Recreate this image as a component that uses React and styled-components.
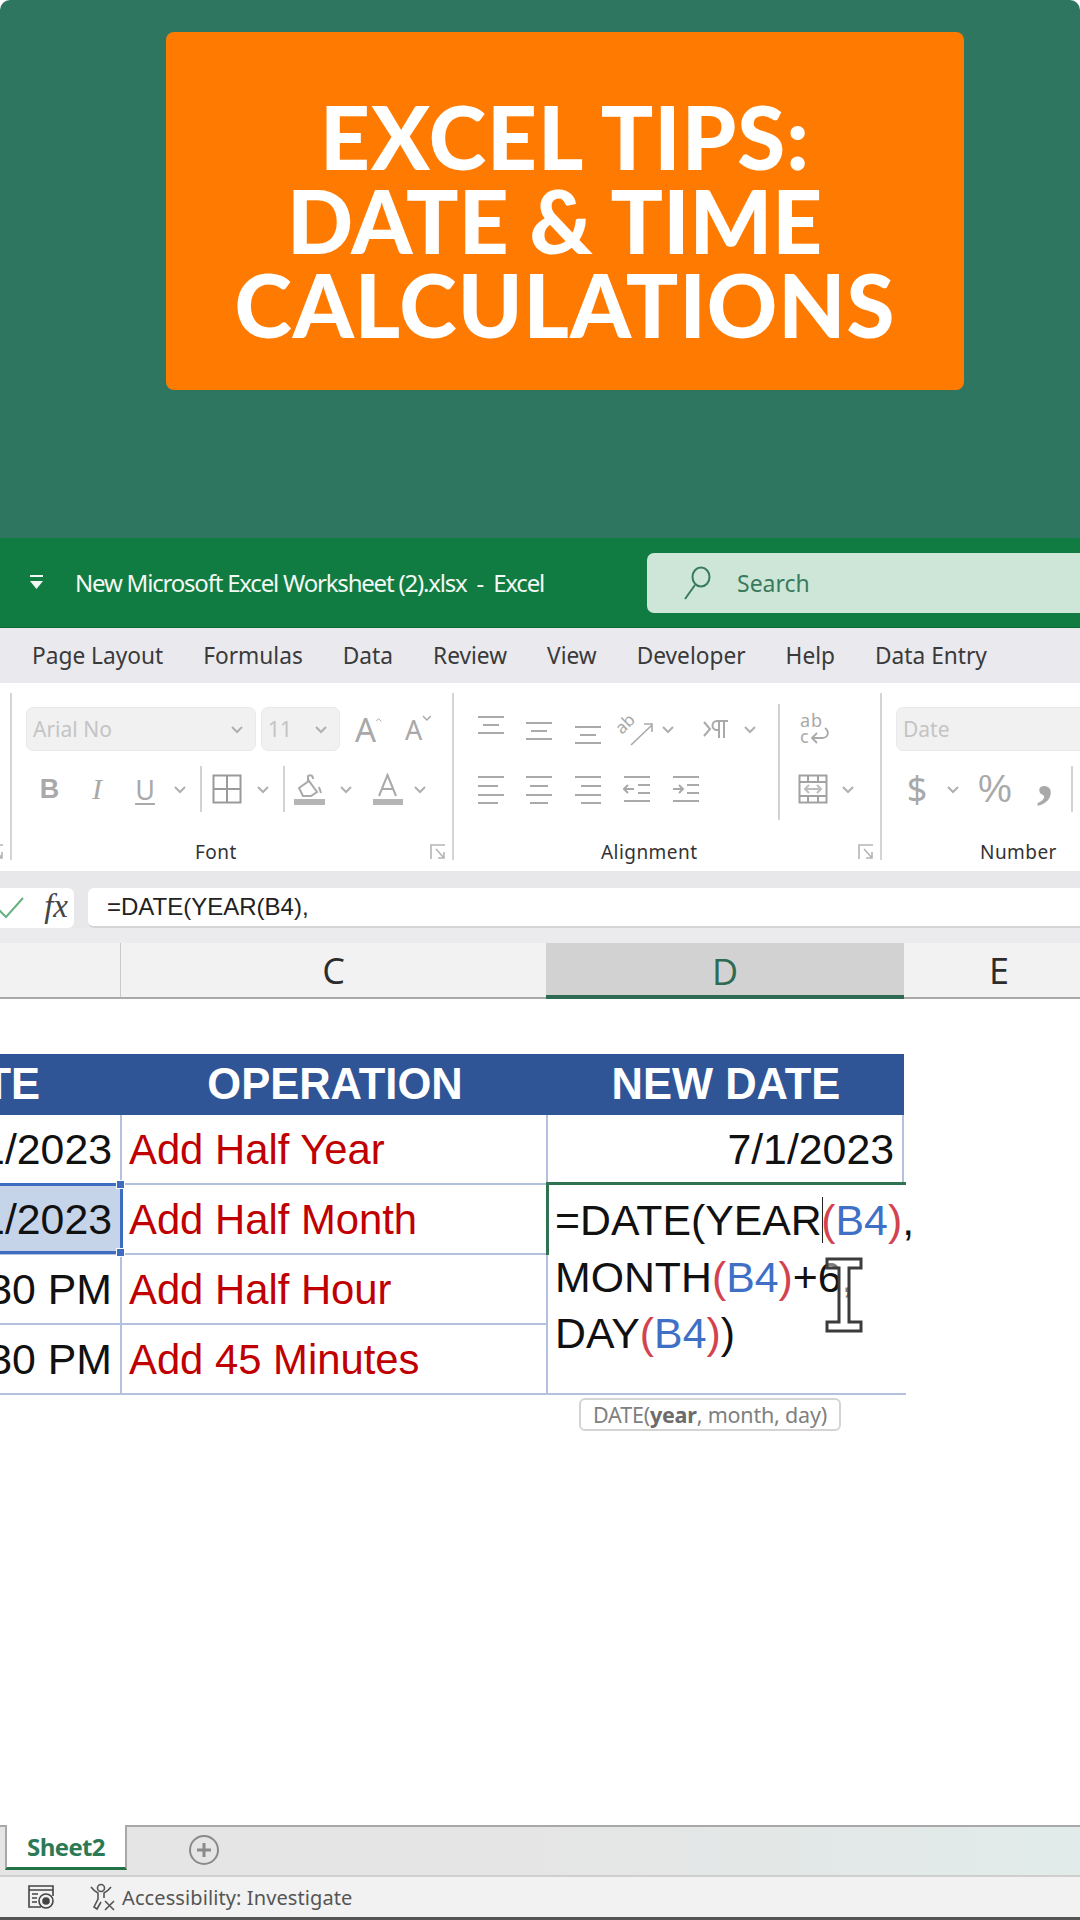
import React from "react";
import styled, { createGlobalStyle } from "styled-components";

const Global = createGlobalStyle`
  html, body { margin: 0; padding: 0; background: #000; }
  #root { width: 1080px; height: 1920px; overflow: hidden; }
  * { box-sizing: border-box; }
`;

const ICON = "#a9a9a9";
const UI = `"Noto Sans", "Open Sans", sans-serif`;
const CELL = `"Liberation Sans", Arial, sans-serif`;

const Page = styled.div`
  width: 1080px; height: 1920px; display: flex; flex-direction: column; overflow: hidden; background: #fff;
  font-family: ${UI};
`;
const Hero = styled.header`
  height: 538px; flex: none; background: #2e7660; padding: 32px 116px 148px 166px; border-radius: 10px 10px 0 0;
`;
const Card = styled.div`
  height: 358px; background: #ff7a00; border-radius: 8px; display: flex; align-items: center; justify-content: center;
`;
const Headline = styled.h1`
  margin: 0; padding-top: 20px; color: #fff; font: 900 87px/84px Lato, sans-serif; text-align: center; white-space: pre;
`;
const HeadLine = styled.span`
  display: block; letter-spacing: ${p => p.$ls}px;
`;

const TitleBar = styled.div`
  height: 90px; flex: none; background: #107c41; display: flex; align-items: center; padding-left: 30px;
  border-bottom: 1px solid #0d6b38;
`;
const TitleText = styled.div`
  margin-left: 32px; width: 572px; color: #f2f8f4; font: 400 24px ${UI}; letter-spacing: -1.2px; white-space: pre;
`;
const SearchBox = styled.div`
  flex: 1; height: 60px; margin-right: -8px; background: #cde6d8; border-radius: 7px; display: flex; align-items: center; padding-left: 36px; gap: 26px;
  color: #3a7a5c; font: 400 23px ${UI};
`;

const Tabs = styled.nav`
  height: 55px; flex: none; background: #e9e9ee; display: flex; align-items: center; padding-left: 32px; gap: 40px;
  color: #3a3a3a; font: 400 22.7px ${UI}; white-space: nowrap;
`;
const Tab = styled.span``;

const Ribbon = styled.section`
  height: 188px; flex: none; background: #fff; display: flex;
`;
const Group = styled.div`
  width: ${p => p.$w}px; flex: none; height: 100%; padding: 24px 0 0 ${p => p.$pl}px; display: flex; flex-direction: column; overflow: hidden;
`;
const Rule = styled.i`
  width: 2px; flex: none; height: 167px; margin-top: 10px; background: #d4d4d4;
`;
const Tools = styled.div`
  display: flex; flex-direction: column; gap: 15px;
`;
const ToolColumns = styled.div`
  display: flex; align-items: flex-start; height: 105px;
`;
const ToolRow = styled.div`
  display: flex; align-items: center; height: ${p => p.$h || 46}px;
`;
const Slot = styled.span`
  width: ${p => p.$w}px; flex: none; height: 100%; display: flex; align-items: center; justify-content: center; color: ${ICON};
`;
const Combo = styled.div`
  width: ${p => p.$w}px; flex: none; height: 44px; margin-right: ${p => p.$mr || 0}px; background: #f1f1f1; border: 1px solid #e9e9e9; border-radius: 7px;
  display: flex; align-items: center; justify-content: space-between; padding: 0 11px 0 6px; color: #c4c4c4; font: 400 21px ${UI};
`;
const SmallSep = styled.i`
  width: 2px; height: 46px; background: #d2d2d2; display: block;
`;
const TallSepSlot = styled.div`
  width: 32px; flex: none; height: 116px; margin-top: -3px; display: flex; justify-content: center;
`;
const TallSep = styled.i`
  width: 2px; height: 100%; background: #d2d2d2; display: block;
`;
const Bold = styled.span`font: 700 27px ${CELL}; color: ${ICON};`;
const Italic = styled.span`font: italic 400 30px "Liberation Serif", serif; color: ${ICON};`;
const Under = styled.span`font: 400 27px ${UI}; color: ${ICON}; text-decoration: underline; text-decoration-thickness: 1.5px; text-underline-offset: 3px;`;
const BigA = styled.span`font: 400 ${p => p.$s}px ${UI}; color: ${ICON}; line-height: 1;`;
const Sym = styled.span`font: 400 ${p => p.$s}px ${p => p.$f || UI}; color: ${ICON}; line-height: 1;`;
const CommaMark = styled.span`
  display: block; font-weight: 700; margin-top: -30px;
`;
const Caps = styled.svg`
  margin-top: ${p => p.$mt}px;
`;
const LabelRow = styled.div`
  margin-top: auto; height: 38px; display: flex; align-items: center; justify-content: space-between; padding-right: 6px; padding-left: ${p => p.$l}px; margin-left: -${p => p.$pl}px;
`;
const GroupLabel = styled.span`
  font: 400 19px ${UI}; color: #333; letter-spacing: .45px;
`;
const Stub = styled(Group)`
  padding: 0;
`;

const FormulaBar = styled.div`
  height: 57px; flex: none; background: #e8e8ea; padding-top: 17px; display: flex; gap: 14px;
`;
const FxBox = styled.div`
  width: 74px; background: #fff; border-radius: 0 6px 6px 0; display: flex; align-items: center; justify-content: space-between; padding-right: 6px;
`;
const Fx = styled.span`
  font: italic 400 33px "Liberation Serif", serif; color: #444; margin-top: -3px;
`;
const FormulaInput = styled.div`
  flex: 1; background: #fff; border-radius: 6px 0 0 6px; border-bottom: 2px solid #d5d5d5; padding-left: 19px; display: flex; align-items: center;
  font: 400 24px ${CELL}; color: #222;
`;

const HeadStrip = styled.div`
  height: 15px; flex: none; background: #ebebed;
`;
const ColumnHeads = styled.div`
  height: 56px; flex: none; display: grid; grid-template-columns: 120px 426px 358px 190px; background: #f2f2f2; border-bottom: 2px solid #a9a9a9;
`;
const ColHead = styled.div`
  display: flex; align-items: center; justify-content: center; font: 400 36px "Open Sans", sans-serif;
  color: ${p => p.$on ? "#2f6b52" : "#2c2c2c"};
  background: ${p => p.$on ? "#d2d2d2" : "transparent"};
  border-left: ${p => p.$edge ? "1px solid #c9c9c9" : "none"};
  box-shadow: ${p => p.$on ? "inset 0 -4px 0 #2f6b52" : "none"};
  margin-bottom: ${p => p.$on ? "-2px" : "0"};
`;

const Sheet = styled.main`
  flex: 1; background: #fff; padding-top: 55px;
`;
const Table = styled.div`
  width: 904px; display: grid; grid-template-columns: 122px 426px 356px; grid-template-rows: 61px 70px 70px 70px 70px;
  position: relative;
`;
const Head = styled.div`
  background: #2f5597; color: #fff; font: 700 43.5px ${CELL}; display: flex; align-items: center; overflow: hidden; white-space: nowrap;
  justify-content: ${p => p.$end ? "flex-end" : "center"};
  padding-right: ${p => p.$end ? "82px" : "0"};
`;
const Cell = styled.div`
  border-bottom: 2px solid #b3c1de; border-right: 2px solid #b3c1de; display: flex; align-items: center; overflow: hidden; white-space: nowrap;
  font: 400 ${p => p.$red ? "41.8px" : "42.8px"} ${CELL}; color: ${p => p.$red ? "#c00000" : "#111"};
  justify-content: ${p => p.$right ? "flex-end" : "flex-start"};
  padding: 1px ${p => p.$right ? "8px" : "0"} 0 ${p => p.$right ? "0" : "7px"};
  background: ${p => p.$sel ? "#c6d4ea" : "#fff"};
`;
const Selection = styled.div`
  position: absolute; left: -4px; width: 127px; top: 129px; height: 71px; border: 3px solid #3d6cc0; pointer-events: none;
`;
const Handle = styled.i`
  position: absolute; right: -5px; width: 9px; height: 9px; background: #3d6cc0; border: 1px solid #fff;
  ${p => p.$top ? "top: -6px;" : "bottom: -6px;"}
`;
const EditCell = styled.div`
  grid-column: 3; grid-row: 3 / span 3; position: relative; border-bottom: 2px solid #b3c1de; border-top: 3px solid #2f7352;
  margin-top: -3px; margin-right: -2px; padding: 7px 0 0 7px; font: 400 42.8px/56.5px ${CELL}; color: #111; white-space: nowrap;
`;
const EditEdge = styled.i`
  position: absolute; left: -2px; top: -3px; width: 3px; height: 73px; background: #2f7352;
`;
const Paren = styled.span`color: #d2434f;`;
const Ref = styled.span`color: #3f70c6;`;
const Caret = styled.span`
  display: inline-block; width: 0; height: 46px; border-left: 1.5px solid #222; vertical-align: -8px; margin-right: -1.5px;
`;
const Beam = styled.svg`
  position: absolute; left: 277px; top: 72px;
`;
const Hint = styled.div`
  position: absolute; left: 31px; top: 213px; width: 262px; height: 33px; background: #fff; border: 2px solid #d4d4d4; border-radius: 6px;
  display: flex; align-items: center; justify-content: center; font: 400 21.5px ${UI}; color: #808080; letter-spacing: -.2px;
  b { color: #6c6c6c; font-weight: 700; }
`;

const SheetTabs = styled.div`
  height: 52px; flex: none; background: linear-gradient(90deg, #e5e5e5 0%, #e5e5e5 50%, #e1ecea 100%); border-top: 2px solid #a8a8a8; border-bottom: 2px solid #cfcfcf;
  display: flex; padding-left: 5px;
`;
const SheetTab = styled.div`
  width: 122px; height: 45px; margin-top: -2px; background: #fff; border-left: 2px solid #a8a8a8; border-right: 2px solid #a8a8a8; border-bottom: 3px solid #217346;
  display: flex; align-items: center; justify-content: center; font: 700 24px "Open Sans", sans-serif; color: #2b7a55; letter-spacing: -.6px;
`;
const AddSheet = styled.div`
  margin-left: 62px; margin-top: 8px; width: 30px; height: 30px;
`;
const StatusBar = styled.footer`
  height: 43px; flex: none; background: #f2f2f2; border-bottom: 3px solid #555; display: flex; align-items: center; padding-left: 27px; color: #555; font: 400 20px ${UI};
`;
const StatusText = styled.span`margin-left: 6px; letter-spacing: .1px;`;

const Chev = () => (
  <svg width="14" height="9" viewBox="0 0 14 9" fill="none" stroke="#b0b0b0" strokeWidth="2"><path d="M2 2l5 5 5-5" /></svg>
);
const Lines = ({ rows }) => (
  <svg width="28" height="32" viewBox="0 0 28 32" fill="none" stroke={ICON} strokeWidth="2">
    {rows.map(([a, b, y]) => <path key={y} d={`M${a} ${y}H${b}`} />)}
  </svg>
);
const Launcher = () => (
  <svg width="16" height="16" viewBox="0 0 16 16" fill="none" stroke="#b5b5b5" strokeWidth="1.6">
    <path d="M15 1H1v14M6 5l8 9M14 8v6H8" />
  </svg>
);
const Borders = () => (
  <svg width="30" height="30" viewBox="0 0 30 30" fill="none" stroke="#9a9a9a" strokeWidth="2"><rect x="1.5" y="1.5" width="27" height="27" /><path d="M15 1.500v27M1.500 15h27" /></svg>
);
const Bucket = () => (
  <svg width="32" height="32" viewBox="0 0 32 32" fill="none" stroke={ICON} strokeWidth="2">
    <path d="M5 15L15 8l8 11-6 4H9zM14 9V3c3-2 5 0 5 3M25 14l2 6" />
    <path d="M0 26h31v6H0z" fill="#b5b5b5" stroke="none" />
  </svg>
);
const ColorA = () => (
  <svg width="32" height="32" viewBox="0 0 32 32" fill="none" stroke={ICON} strokeWidth="2">
    <path d="M7 23L15.5 2 24 23M10 16h11" />
    <path d="M1 26h30v6H1z" fill="#b5b5b5" stroke="none" />
  </svg>
);
const Orient = () => (
  <svg width="34" height="32" viewBox="0 0 34 32" fill="none" stroke={ICON} strokeWidth="1.6" overflow="visible">
    <text x="2" y="22" fontFamily="Noto Sans" fontSize="17" fill={ICON} stroke="none" transform="rotate(-45 2 22)">ab</text>
    <path d="M11 32L32 12M24 11h8v8" />
  </svg>
);
const Para = () => (
  <svg width="26" height="22" viewBox="0 0 26 22" fill="none" stroke={ICON} strokeWidth="2">
    <path d="M1 4l6 7-6 7" />
    <path d="M19 3h-5a4 4 0 000 9h2V3M16 12v8M19 3h6M21 3v17" />
  </svg>
);
const Wrap = () => (
  <svg width="30" height="32" viewBox="0 0 30 32" fill="none" stroke={ICON} strokeWidth="1.8">
    <text x="0" y="14" fontFamily="Noto Sans" fontSize="18" letterSpacing="1" fill={ICON} stroke="none">ab</text>
    <text x="0" y="30" fontFamily="Noto Sans" fontSize="18" fill={ICON} stroke="none">c</text>
    <path d="M25 15c5 4 3 10-3 10H12M17 20l-5 5 5 5" />
  </svg>
);
const Merge = () => (
  <svg width="30" height="30" viewBox="0 0 30 30" fill="none" stroke="#a2a2a2" strokeWidth="2">
    <rect x="1.5" y="1.5" width="27" height="27" />
    <path d="M1.500 8h27M1.500 22h27M10 1.500V8M20 1.500V8M10 22v7M20 22v7" />
    <path d="M7 15h16M11 11l-4 4 4 4M19 11l4 4-4 4" stroke="#bdbdbd" />
  </svg>
);
const Indent = ({ dir }) => (
  <svg width="28" height="28" viewBox="0 0 28 28" fill="none" stroke={ICON} strokeWidth="2">
    <path d="M1 2h26M1 26h26M15 10h12M15 18h12" />
    {dir === "in" ? <path d="M1 14h9M7 10l4 4-4 4" /> : <path d="M11 14H2M5 10l-4 4 4 4" />}
  </svg>
);
const SearchGlyph = () => (
  <svg width="28" height="34" viewBox="0 0 28 34" fill="none" stroke="#3a7a5c" strokeWidth="2"><ellipse cx="18" cy="11" rx="8.500" ry="9.500" /><path d="M12 19L2 33" /></svg>
);
const Quick = () => (
  <svg width="13" height="15" viewBox="0 0 13 15" fill="#f2f8f4"><path d="M0 0h13v2H0zM0 6h13l-6.500 8z" /></svg>
);
const Check = () => (
  <svg width="24" height="24" viewBox="0 0 24 24" fill="none" stroke="#66b27f" strokeWidth="2"><path d="M-2 13l8 8L23 2" /></svg>
);
const IBeam = () => (
  <Beam width="38" height="76" viewBox="0 0 38 76" fill="none">
    <path d="M2 2h34v9H24v54h12v9H2v-9h12V11H2z" fill="#fff" fillOpacity=".45" stroke="#3c3c3c" strokeWidth="3" />
  </Beam>
);
const Plus = () => (
  <svg width="30" height="30" viewBox="0 0 30 30" fill="none" stroke="#8a8a8a"><circle cx="15" cy="15" r="14" strokeWidth="2" /><path d="M8 15h14M15 8v14" strokeWidth="3" /></svg>
);
const Macro = () => (
  <svg width="28" height="24" viewBox="0 0 28 24" fill="none" stroke="#444" strokeWidth="1.600">
    <path d="M14 22H2V1h24v10M2 5h24M5 9h6M5 13h5M5 17h5" />
    <circle cx="19" cy="16" r="7" fill="#f2f2f2" /><circle cx="19" cy="16" r="3" fill="#444" />
  </svg>
);
const Access = () => (
  <svg width="28" height="28" viewBox="0 0 28 28" fill="none" stroke="#555" strokeWidth="1.600">
    <circle cx="13" cy="5" r="3.500" />
    <path d="M3 4c3 4 5 5 7 6v6l-4 8 3 2 4-7M23 4c-3 4-5 5-7 6v5" />
    <path d="M17 18l9 9M26 18l-9 9" />
  </svg>
);

export default function App() {
  return (
    <>
      <Global />
      <Page>
        <Hero>
          <Card>
            <Headline>
              <HeadLine $ls={1}>EXCEL TIPS:</HeadLine>
              <HeadLine $ls={0}>{"DATE & TIME\u00a0"}</HeadLine>
              <HeadLine $ls={1}>CALCULATIONS</HeadLine>
            </Headline>
          </Card>
        </Hero>
        <TitleBar>
          <Quick />
          <TitleText>{"New Microsoft Excel Worksheet (2).xlsx  -  Excel"}</TitleText>
          <SearchBox><SearchGlyph /><span>Search</span></SearchBox>
        </TitleBar>
        <Tabs>
          {["Page Layout", "Formulas", "Data", "Review", "View", "Developer", "Help", "Data Entry"].map(t => <Tab key={t}>{t}</Tab>)}
        </Tabs>
        <Ribbon>
          <Stub $w={10} $pl={0}><LabelRow $l={0} $pl={12}><Launcher /></LabelRow></Stub>
          <Rule />
          <Group $w={440} $pl={14}>
            <Tools>
              <ToolRow $h={44}>
                <Combo $w={230} $mr={5}>Arial No<Chev /></Combo>
                <Combo $w={79}>11<Chev /></Combo>
                <Slot $w={15} />
                <Slot $w={27}><BigA $s={33}>A</BigA><Caps $mt={-14} width="9" height="14" viewBox="0 0 9 14" fill="none" stroke={ICON} strokeWidth="1.500"><path d="M0 6l4-4 4 4" /></Caps></Slot>
                <Slot $w={23} />
                <Slot $w={27}><BigA $s={27}>A</BigA><Caps $mt={-18} width="10" height="14" viewBox="0 0 10 14" fill="none" stroke={ICON} strokeWidth="1.500"><path d="M1 3l4 4 4-4" /></Caps></Slot>
              </ToolRow>
              <ToolRow>
                <Slot $w={47}><Bold>B</Bold></Slot>
                <Slot $w={48}><Italic>I</Italic></Slot>
                <Slot $w={48}><Under>U</Under></Slot>
                <Slot $w={22}><Chev /></Slot>
                <Slot $w={20}><SmallSep /></Slot>
                <Slot $w={32}><Borders /></Slot>
                <Slot $w={40}><Chev /></Slot>
                <Slot $w={2}><SmallSep /></Slot>
                <Slot $w={50}><Bucket /></Slot>
                <Slot $w={22}><Chev /></Slot>
                <Slot $w={10} />
                <Slot $w={42}><ColorA /></Slot>
                <Slot $w={22}><Chev /></Slot>
              </ToolRow>
            </Tools>
            <LabelRow $l={183} $pl={14}><GroupLabel>Font</GroupLabel><Launcher /></LabelRow>
          </Group>
          <Rule />
          <Group $w={426} $pl={13}>
            <ToolColumns>
              <Tools>
                <ToolRow $h={44}>
                  <Slot $w={48}><Lines rows={[[1, 27, 4], [6, 22, 12], [1, 27, 20]]} /></Slot>
                  <Slot $w={48}><Lines rows={[[1, 27, 10], [6, 22, 18], [1, 27, 26]]} /></Slot>
                  <Slot $w={50}><Lines rows={[[1, 27, 14], [6, 22, 22], [1, 27, 30]]} /></Slot>
                  <Slot $w={48}><Orient /></Slot>
                  <Slot $w={14}><Chev /></Slot>
                  <Slot $w={20} />
                  <Slot $w={42}><Para /></Slot>
                  <Slot $w={26}><Chev /></Slot>
                </ToolRow>
                <ToolRow>
                  <Slot $w={48}><Lines rows={[[1, 27, 4], [1, 21, 13], [1, 27, 22], [1, 21, 30]]} /></Slot>
                  <Slot $w={48}><Lines rows={[[1, 27, 4], [5, 23, 13], [1, 27, 22], [5, 23, 30]]} /></Slot>
                  <Slot $w={50}><Lines rows={[[1, 27, 4], [7, 27, 13], [1, 27, 22], [7, 27, 30]]} /></Slot>
                  <Slot $w={48}><Indent dir="out" /></Slot>
                  <Slot $w={50}><Indent dir="in" /></Slot>
                </ToolRow>
              </Tools>
              <TallSepSlot><TallSep /></TallSepSlot>
              <Tools>
                <ToolRow $h={44}><Slot $w={40}><Wrap /></Slot></ToolRow>
                <ToolRow>
                  <Slot $w={35}><Merge /></Slot>
                  <Slot $w={7} />
                  <Slot $w={22}><Chev /></Slot>
                </ToolRow>
              </Tools>
            </ToolColumns>
            <LabelRow $l={147} $pl={13}><GroupLabel>Alignment</GroupLabel><Launcher /></LabelRow>
          </Group>
          <Rule />
          <Group $w={198} $pl={14}>
            <Tools>
              <ToolRow $h={44}><Combo $w={250}>Date</Combo></ToolRow>
              <ToolRow>
                <Slot $w={42}><Sym $s={36}>$</Sym></Slot>
                <Slot $w={4} />
                <Slot $w={22}><Chev /></Slot>
                <Slot $w={62}><Sym $s={38} $f={CELL}>%</Sym></Slot>
                <Slot $w={38}><Sym $s={66} $f={`"Liberation Serif", serif`}><CommaMark>,</CommaMark></Sym></Slot>
                <Slot $w={16}><SmallSep /></Slot>
              </ToolRow>
            </Tools>
            <LabelRow $l={98} $pl={14}><GroupLabel>Number</GroupLabel></LabelRow>
          </Group>
        </Ribbon>
        <FormulaBar>
          <FxBox><Check /><Fx>fx</Fx></FxBox>
          <FormulaInput>=DATE(YEAR(B4),</FormulaInput>
        </FormulaBar>
        <HeadStrip />
        <ColumnHeads>
          <ColHead />
          <ColHead $edge>C</ColHead>
          <ColHead $on>D</ColHead>
          <ColHead>E</ColHead>
        </ColumnHeads>
        <Sheet>
          <Table>
            <Head $end>DATE</Head>
            <Head>OPERATION</Head>
            <Head>NEW DATE</Head>
            <Cell $right>1/1/2023</Cell>
            <Cell $red>Add Half Year</Cell>
            <Cell $right>7/1/2023</Cell>
            <Cell $right $sel>1/1/2023</Cell>
            <Cell $red>Add Half Month</Cell>
            <Cell $right>3:30 PM</Cell>
            <Cell $red>Add Half Hour</Cell>
            <Cell $right>3:30 PM</Cell>
            <Cell $red>Add 45 Minutes</Cell>
            <EditCell>
              <EditEdge />
              =DATE(YEAR<Caret /><Paren>(</Paren><Ref>B4</Ref><Paren>)</Paren>,<br />
              MONTH<Paren>(</Paren><Ref>B4</Ref><Paren>)</Paren>+6,<br />
              DAY<Paren>(</Paren><Ref>B4</Ref><Paren>)</Paren>)
              <IBeam />
              <Hint><span>DATE(<b>year</b>, month, day)</span></Hint>
            </EditCell>
            <Selection><Handle $top /><Handle /></Selection>
          </Table>
        </Sheet>
        <SheetTabs>
          <SheetTab>Sheet2</SheetTab>
          <AddSheet><Plus /></AddSheet>
        </SheetTabs>
        <StatusBar>
          <Macro />
          <Slot $w={33} />
          <Access />
          <StatusText>Accessibility: Investigate</StatusText>
        </StatusBar>
      </Page>
    </>
  );
}
